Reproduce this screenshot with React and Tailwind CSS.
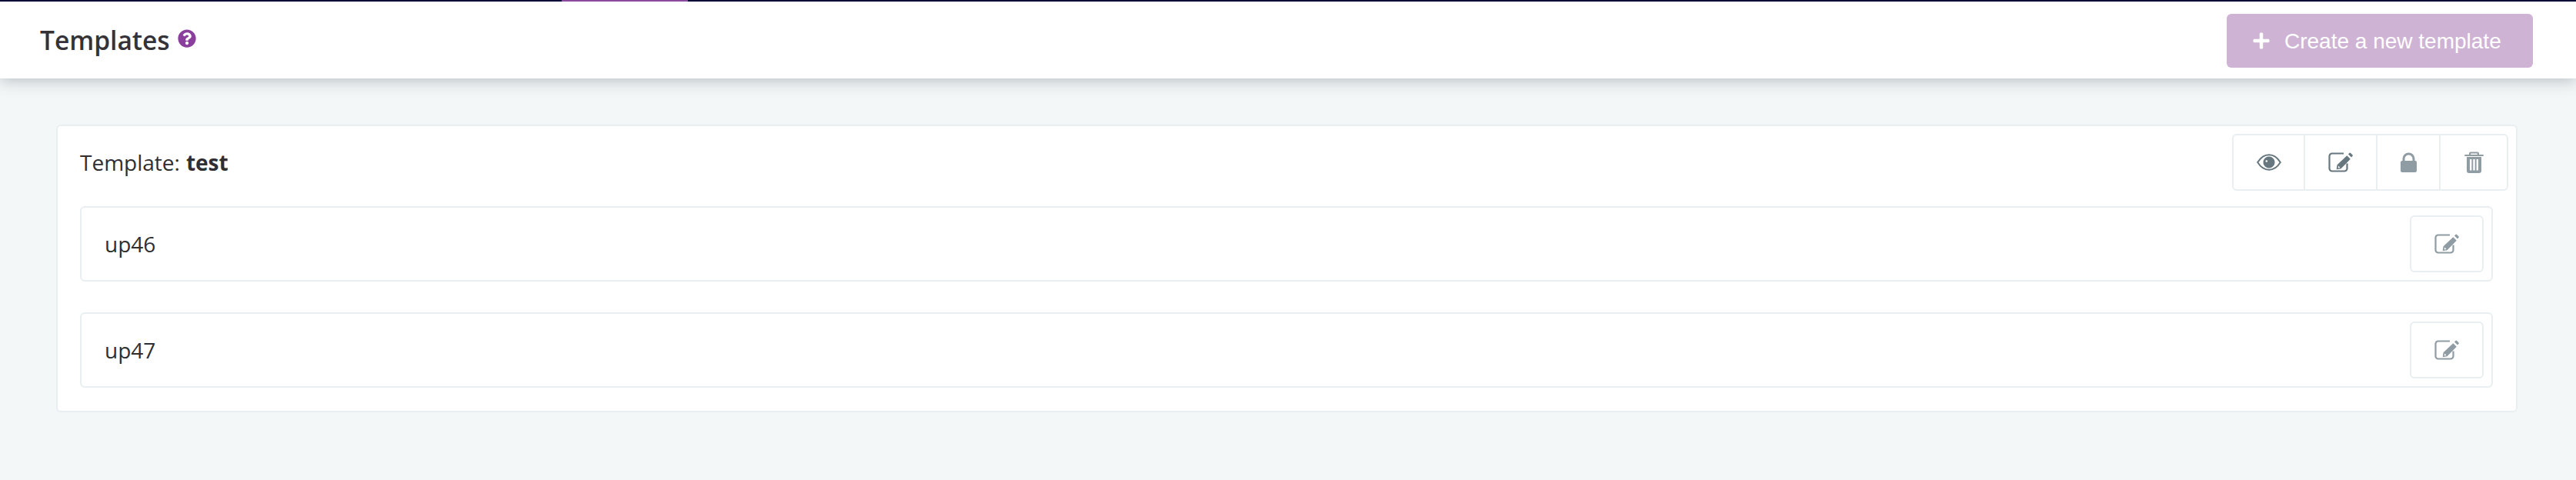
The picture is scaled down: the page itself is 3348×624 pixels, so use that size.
import React from 'react';
import { FaPlus, FaQuestionCircle } from 'react-icons/fa';

function EditIcon() {
  return (
    <svg viewBox="0 0 32 26" className="w-[32px] h-[26px]" fill="currentColor">
      <path fill="none" stroke="currentColor" strokeWidth="2.200" d="M20 1.500H5A3.500 3.500 0 0 0 1.500 5v16A3.500 3.500 0 0 0 5 24.500h16a3.500 3.500 0 0 0 3.500-3.500v-6.500" />
      <path d="M24.300 4.300l4.500 4.500L16.500 21.200l-5.800 1 .9-5.900zM13.300 17.600l-.6 2.800 2.800-.5z" fillRule="evenodd" />
      <path d="M26 2.400l1.400-1.400a1.200 1.200 0 0 1 1.700 0l2.300 2.300a1.200 1.200 0 0 1 0 1.700L30 6.400z" />
    </svg>
  );
}

function EyeIcon() {
  return (
    <svg viewBox="0 0 32 22" className="w-[32px] h-[22px]" fill="currentColor">
      <path fill="none" stroke="currentColor" strokeWidth="2" d="M1.200 11C5 5 10 1.200 16 1.200S27 5 30.800 11C27 17 22 20.800 16 20.800S5 17 1.200 11z" />
      <path fillRule="evenodd" d="M16 3.500a7.500 7.500 0 1 1-.01 0zM11.500 9.500a1.300 1.300 0 1 0 2.600 0a1.300 1.300 0 1 0-2.600 0z" />
    </svg>
  );
}

function LockIcon() {
  return (
    <svg viewBox="0 0 21 26" className="w-[21px] h-[26px]" fill="currentColor">
      <path fill="none" stroke="currentColor" strokeWidth="3" d="M4 13V8.500a6.500 6.500 0 0 1 13 0V13" />
      <rect x="0" y="11" width="21" height="15" rx="2" />
    </svg>
  );
}

function TrashIcon() {
  return (
    <svg viewBox="0 0 25 28" className="w-[25px] h-[28px]" fill="currentColor">
      <path d="M8 0.500h9a2 2 0 0 1 2 2V4h5a.9.9 0 0 1 0 2H1a.9.9 0 0 1 0-2h5V2.500a2 2 0 0 1 2-2zM8.200 2.400V4h8.600V2.400z" fillRule="evenodd" />
      <path fillRule="evenodd" d="M3 7h19v18a3 3 0 0 1-3 3H6a3 3 0 0 1-3-3zM7 10v14.500h2.400V10zM11.300 10v14.500h2.400V10zM15.600 10v14.500h2.400V10z" />
    </svg>
  );
}

function RowItem({ name, className }) {
  return (
    <div className={`h-[98px] flex items-center justify-between pl-[30px] pr-[10px] bg-white border-2 border-[#e9eef1] rounded-[6px] ${className}`}>
      <span className="text-[28px] text-[#2f2f33]">{name}</span>
      <button className="w-[96px] h-[74px] flex items-center justify-center border-2 border-[#e9eef1] rounded-[6px] text-[#8f9ca4]">
        <EditIcon />
      </button>
    </div>
  );
}

export default function App() {
  return (
    <div className="h-[624px] bg-[#f4f7f8] font-['Open_Sans',sans-serif]">
      <header className="relative h-[102px] bg-white shadow-[0_4px_18px_rgba(60,75,85,0.3)]">
        <div className="h-[2px] bg-[#020634] flex">
          <div className="ml-[730px] w-[164px] h-full bg-[#8b4a9c]" />
        </div>
        <div className="h-[100px] flex items-center justify-between pl-[52px] pr-[56px]">
          <div className="flex items-center gap-[10px]">
            <h1 className="text-[33.5px] font-semibold text-[#333338]">Templates</h1>
            <FaQuestionCircle className="w-[24px] h-[24px] text-[#8b3f9c] mb-[4px]" />
          </div>
          <button className="w-[398px] h-[70px] mt-[2px] flex items-center pl-[33px] gap-[18px] bg-[#cfb3d5] rounded-[6px] text-white text-[28px] font-['Liberation_Sans',sans-serif]">
            <FaPlus className="w-[24px] h-[24px]" />
            <span className="pt-[2px]">Create a new template</span>
          </button>
        </div>
      </header>
      <main className="pt-[60px] pl-[73px] pr-[76px]">
        <section className="h-[374px] bg-white border-2 border-[#e9eef1] rounded-[6px] pl-[29px] pr-[30px]">
          <div className="h-[104px] flex items-center justify-between">
            <div className="text-[28px] text-[#2f2f33] mt-[-10px]">
              Template:<strong className="font-bold ml-[8px]">test</strong>
            </div>
            <div className="flex h-[74px] mr-[-20px] mt-[-10px] border-2 border-[#e9eef1] rounded-[6px] text-[#66777f]">
              <button className="w-[93px] flex items-center justify-center border-r-2 border-[#e9eef1]">
                <EyeIcon />
              </button>
              <button className="w-[94px] flex items-center justify-center border-r-2 border-[#e9eef1]">
                <EditIcon />
              </button>
              <button className="w-[82px] flex items-center justify-center border-r-2 border-[#e9eef1] text-[#8f9ca4]">
                <LockIcon />
              </button>
              <button className="w-[86px] flex items-center justify-center text-[#8f9ca4]">
                <TrashIcon />
              </button>
            </div>
          </div>
          <RowItem name="up46" className="mb-[40px]" />
          <RowItem name="up47" />
        </section>
      </main>
    </div>
  );
}
